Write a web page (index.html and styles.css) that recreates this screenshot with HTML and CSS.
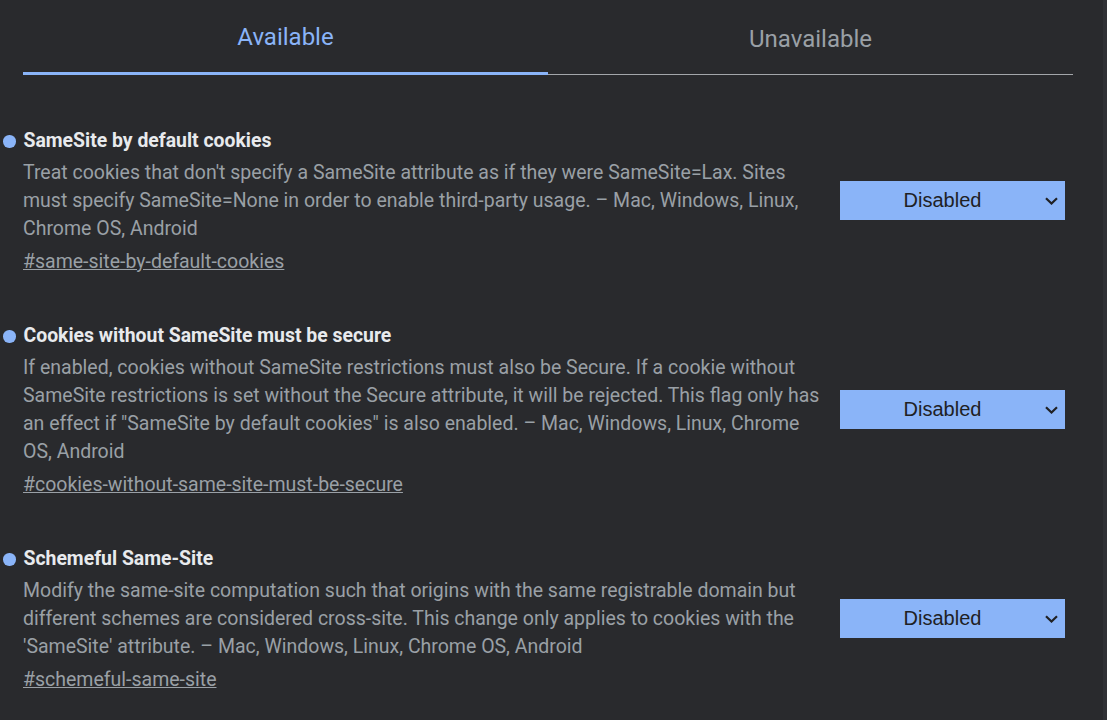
FILE: index.html
```html
<!DOCTYPE html>
<html lang="en">
<head>
    <meta charset="UTF-8">
    <meta name="viewport" content="width=device-width, initial-scale=1.0">
    <title>Experiments</title>
    <link rel="stylesheet" href="styles.css">
</head>
<body>
    <div class="page">
        <div class="tabs">
            <div class="tab active">Available</div>
            <div class="tab">Unavailable</div>
        </div>

        <div class="experiments">
            <div class="experiment">
                <div class="experiment-text">
                    <h3 class="experiment-name"><span class="dot"></span>SameSite by default cookies</h3>
                    <p class="experiment-desc">Treat cookies that don't specify a SameSite attribute as if they were SameSite=Lax. Sites must specify SameSite=None in order to enable third-party usage. – Mac, Windows, Linux, Chrome OS, Android</p>
                    <a class="experiment-link" href="#same-site-by-default-cookies">#same-site-by-default-cookies</a>
                </div>
                <div class="select">
                    <span>Disabled</span>
                    <svg width="13" height="8" viewBox="0 0 13 8"><path d="M1 1.2 L6.5 6.5 L12 1.2" fill="none" stroke="#202124" stroke-width="2.2"/></svg>
                </div>
            </div>

            <div class="experiment">
                <div class="experiment-text">
                    <h3 class="experiment-name"><span class="dot"></span>Cookies without SameSite must be secure</h3>
                    <p class="experiment-desc">If enabled, cookies without SameSite restrictions must also be Secure. If a cookie without SameSite restrictions is set without the Secure attribute, it will be rejected. This flag only has an effect if "SameSite by default cookies" is also enabled. – Mac, Windows, Linux, Chrome OS, Android</p>
                    <a class="experiment-link" href="#cookies-without-same-site-must-be-secure">#cookies-without-same-site-must-be-secure</a>
                </div>
                <div class="select">
                    <span>Disabled</span>
                    <svg width="13" height="8" viewBox="0 0 13 8"><path d="M1 1.2 L6.5 6.5 L12 1.2" fill="none" stroke="#202124" stroke-width="2.2"/></svg>
                </div>
            </div>

            <div class="experiment">
                <div class="experiment-text">
                    <h3 class="experiment-name"><span class="dot"></span>Schemeful Same-Site</h3>
                    <p class="experiment-desc">Modify the same-site computation such that origins with the same registrable domain but different schemes are considered cross-site. This change only applies to cookies with the 'SameSite' attribute. – Mac, Windows, Linux, Chrome OS, Android</p>
                    <a class="experiment-link" href="#schemeful-same-site">#schemeful-same-site</a>
                </div>
                <div class="select">
                    <span>Disabled</span>
                    <svg width="13" height="8" viewBox="0 0 13 8"><path d="M1 1.2 L6.5 6.5 L12 1.2" fill="none" stroke="#202124" stroke-width="2.2"/></svg>
                </div>
            </div>
        </div>
    </div>
    <div class="edge"></div>
</body>
</html>
```

FILE: styles.css
```css
:root {
    --bg-color: #292a2d;
    --blue: #8ab4f8;
    --text-color: #e8eaed;
    --muted: #9aa0a6;
}

body {
    font-family: Roboto, "Noto Sans", Arial, sans-serif;
    margin: 0;
    background-color: var(--bg-color);
    display: flex;
    min-height: 100vh;
    overflow: hidden;
}

.page {
    flex: 1;
    padding-left: 23px;
}

.edge {
    width: 4px;
    background: #303135;
}

.tabs {
    display: flex;
    width: 1050px;
    border-bottom: 1px solid #a3a6aa;
}

.tab {
    flex: 1;
    text-align: center;
    font-size: 24px;
    line-height: 30px;
    color: var(--muted);
    padding: 24px 0 18px;
    border-bottom: 3px solid transparent;
    margin-bottom: -1px;
}

.tab.active {
    color: var(--blue);
    border-bottom-color: var(--blue);
    padding: 22px 0 20px;
}

.experiments {
    width: 1050px;
    padding-top: 54px;
}

.experiment {
    display: flex;
    align-items: center;
    gap: 12px;
    padding-right: 8px;
    margin-bottom: 48px;
}

.experiment-text {
    flex: 1;
}

.experiment-name {
    display: flex;
    align-items: center;
    gap: 8px;
    margin: 0 0 0 -20px;
    font-size: 19.4px;
    line-height: 24px;
    font-weight: bold;
    color: var(--text-color);
}

.dot {
    width: 12.5px;
    height: 12.5px;
    border-radius: 50%;
    background: var(--blue);
    margin-top: 1px;
}

.experiment-desc {
    margin: 6px 0 0;
    font-size: 19.5px;
    line-height: 28px;
    color: var(--muted);
}

.experiment-link {
    display: inline-block;
    margin-top: 5px;
    font-size: 19.5px;
    line-height: 28px;
    color: var(--muted);
    text-decoration: underline;
}

.select {
    width: 225px;
    height: 39px;
    margin-bottom: 4px;
    display: flex;
    align-items: center;
    background: var(--blue);
    color: #202124;
    font-family: "Liberation Sans", Arial, sans-serif;
    font-size: 20px;
}

.select span {
    flex: 1;
    text-align: center;
}

.select svg {
    margin: 0 7px 0 0;
}
```
